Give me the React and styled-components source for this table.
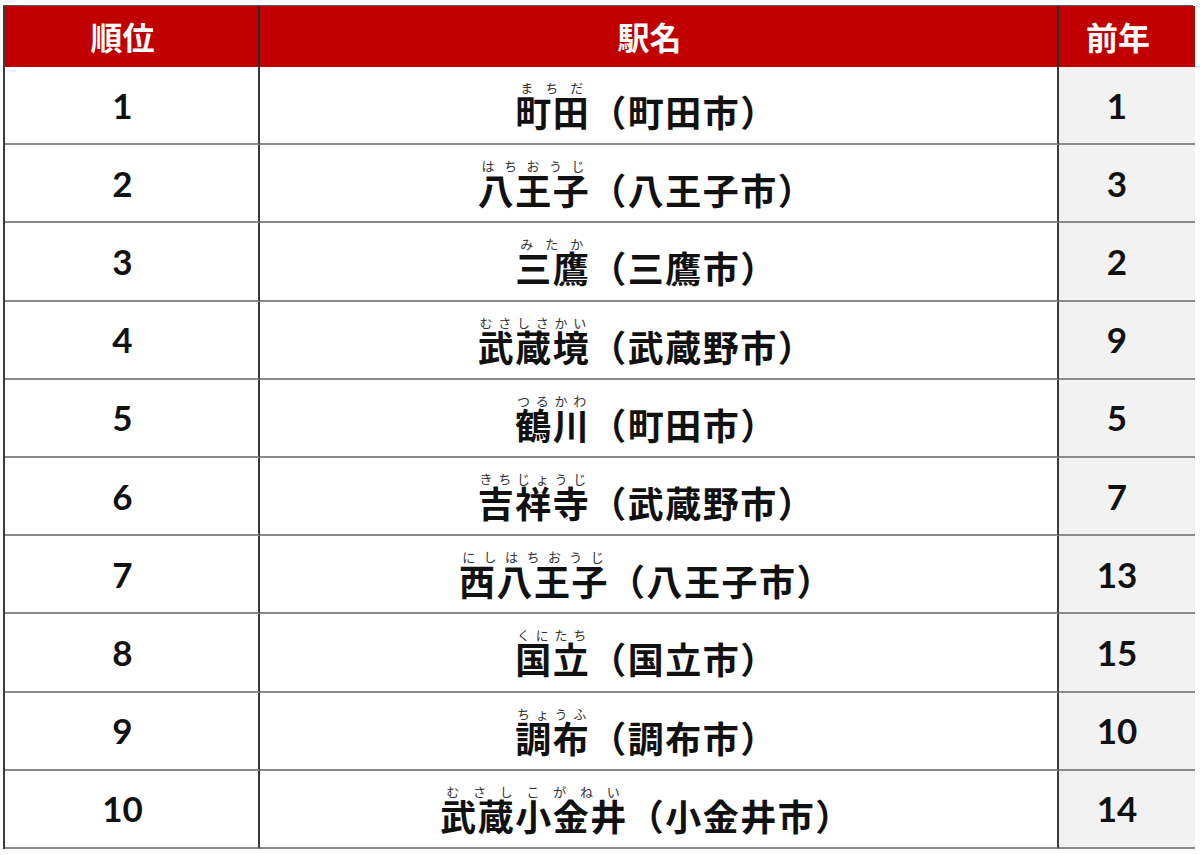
import React from "react";
import styled, { createGlobalStyle } from "styled-components";

const Global = createGlobalStyle`
  html, body { margin: 0; padding: 0; background: #ffffff; }
  body { font-family: "Noto Sans CJK JP", "Noto Sans", sans-serif; }
`;

const Page = styled.div`
  padding: 5px 0 0 3px;
  width: 1200px;
  height: 855px;
  box-sizing: border-box;
  overflow: hidden;
`;

const Table = styled.div`
  display: grid;
  grid-template-columns: 255px 799px 136px;
  grid-template-rows: 61px repeat(10, 78.2px);
  width: 1190px;
  border-left: 2px solid #3a3a3a;
  border-right: 2px solid #3a3a3a;
  border-top: 1px solid #5a5a5a;
  box-sizing: border-box;
`;

const HeadCell = styled.div`
  background: #c00000;
  color: #ffffff;
  font-family: "Noto Sans CJK JP", sans-serif;
  font-weight: 700;
  font-size: 32px;
  display: flex;
  align-items: center;
  justify-content: center;
  border-right: ${(p) => (p.$last ? "none" : "2px solid #2a2a2a")};
  padding-bottom: 2px;
  padding-right: 18px;
  box-sizing: border-box;
`;

const Cell = styled.div`
  background: ${(p) => (p.$shade ? "#f2f2f2" : "#ffffff")};
  border-right: ${(p) => (p.$last ? "none" : "2px solid #3a3a3a")};
  border-bottom: 2px solid #8a8a8a;
  display: flex;
  align-items: center;
  justify-content: center;
  padding-right: ${(p) => p.$shift || 0}px;
  box-sizing: border-box;
  overflow: hidden;
`;

const Num = styled.span`
  font-family: Lato, "Open Sans", sans-serif;
  font-weight: 700;
  font-size: 35px;
  color: #111111;
  line-height: 1;
`;

const Name = styled.span`
  font-family: "Noto Sans CJK JP", sans-serif;
  font-weight: 700;
  font-size: 36px;
  letter-spacing: 1.5px;
  color: #111111;
  line-height: 1;
  padding-top: 6px;
  white-space: nowrap;

  ruby { ruby-position: over; ruby-align: space-around; }
  rt {
    font-size: 13px;
    font-weight: 400;
    color: #333333;
    letter-spacing: 2px;
    line-height: 1;
    padding-bottom: 0;
  }
`;

const rows = [
  { rank: 1, base: "町田", kana: "まちだ", city: "（町田市）", prev: 1 },
  { rank: 2, base: "八王子", kana: "はちおうじ", city: "（八王子市）", prev: 3 },
  { rank: 3, base: "三鷹", kana: "みたか", city: "（三鷹市）", prev: 2 },
  { rank: 4, base: "武蔵境", kana: "むさしさかい", city: "（武蔵野市）", prev: 9 },
  { rank: 5, base: "鶴川", kana: "つるかわ", city: "（町田市）", prev: 5 },
  { rank: 6, base: "吉祥寺", kana: "きちじょうじ", city: "（武蔵野市）", prev: 7 },
  { rank: 7, base: "西八王子", kana: "にしはちおうじ", city: "（八王子市）", prev: 13 },
  { rank: 8, base: "国立", kana: "くにたち", city: "（国立市）", prev: 15 },
  { rank: 9, base: "調布", kana: "ちょうふ", city: "（調布市）", prev: 10 },
  { rank: 10, base: "武蔵小金井", kana: "むさしこがねい", city: "（小金井市）", prev: 14 },
];

export default function App() {
  return (
    <Page>
      <Global />
      <Table>
        <HeadCell>順位</HeadCell>
        <HeadCell>駅名</HeadCell>
        <HeadCell $last>前年</HeadCell>
        {rows.map((r) => (
          <React.Fragment key={r.rank}>
            <Cell $shift={18}>
              <Num>{r.rank}</Num>
            </Cell>
            <Cell $shift={24}>
              <Name>
                <ruby>
                  {r.base}
                  <rt>{r.kana}</rt>
                </ruby>
                {r.city}
              </Name>
            </Cell>
            <Cell $shade $last $shift={20}>
              <Num>{r.prev}</Num>
            </Cell>
          </React.Fragment>
        ))}
      </Table>
    </Page>
  );
}
